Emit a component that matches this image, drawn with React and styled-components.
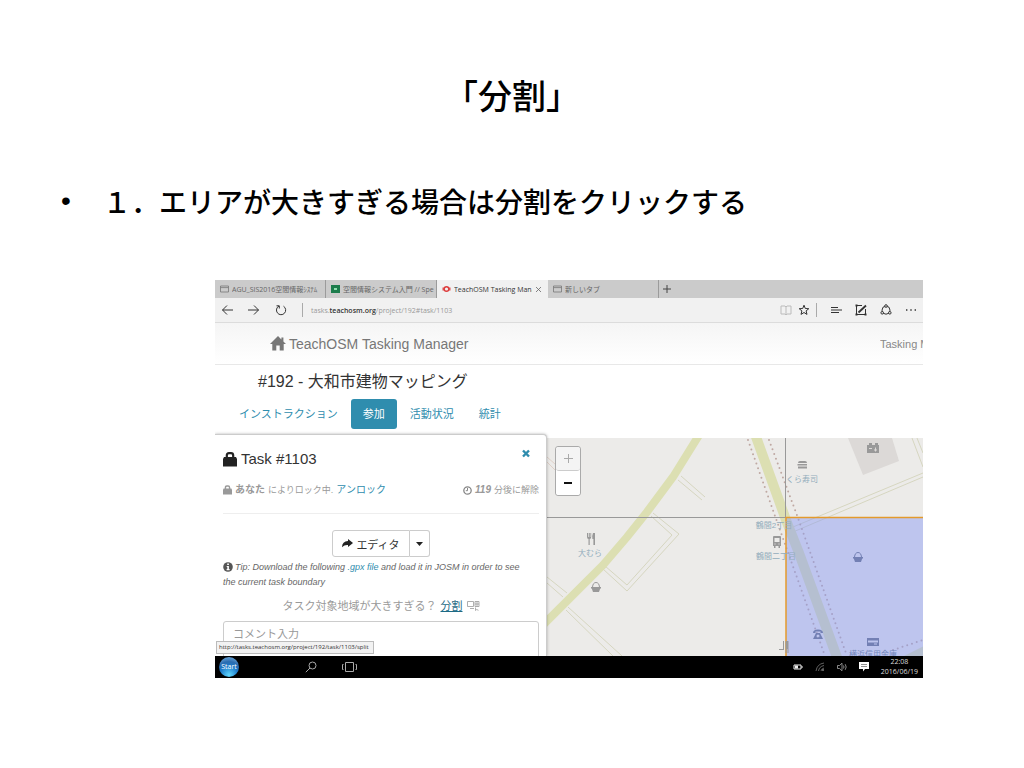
import React from 'react'
import styled, { createGlobalStyle } from 'styled-components'

const GlobalStyle = createGlobalStyle`
    * {
        box-sizing: border-box;
    }

    body {
        margin: 0;
        background: white;
        color: black;
        font-family: "Liberation Sans", "Noto Sans CJK JP", sans-serif;
    }

    button, textarea {
        font-family: inherit;
        margin: 0;
    }

    svg {
        display: block;
        flex: none;
    }
`

const uiFont = '"Open Sans", "Noto Sans CJK JP", sans-serif'

const tabs = [
    { icon: 'page', title: 'AGU_SIS2016空間情報ｼｽﾃﾑ' },
    { icon: 'course', title: '空間情報システム入門 // Spe' },
    { icon: 'osm', title: 'TeachOSM Tasking Manager', active: true },
    { icon: 'page', title: '新しいタブ' }
]

const sections = [
    { label: 'インストラクション' },
    { label: '参加', active: true },
    { label: '活動状況' },
    { label: '統計' }
]

/* slide */

const Slide = styled.main`
    padding: 70px 0 89px;
`

const SlideTitle = styled.h1`
    margin: 0;
    text-align: center;
    font: 500 34px/50px "Noto Sans CJK JP", sans-serif;
`

const BulletList = styled.ul`
    list-style: none;
    margin: 60px 0 58px;
    padding: 0 61px;
`

const BulletItem = styled.li`
    display: flex;
    font: 500 28px/42px "Noto Sans CJK JP", sans-serif;

    &::before {
        content: '•';
        width: 42px;
        font-family: "Liberation Sans", sans-serif;
    }
`

const Browser = styled.section`
    position: relative;
    margin: 0 101px 0 215px;
    overflow: hidden;
    background: white;
`

/* browser chrome */

const TabBar = styled.div`
    display: flex;
    height: 18px;
    background: #cbcbcb;
`

const Tab = styled.button`
    display: flex;
    align-items: center;
    gap: 3px;
    width: 111px;
    padding: 0 ${props => props.$active ? 5 : 1}px 0 5px;
    border: 0;
    border-right: 1px solid ${props => props.$active ? '#f1f1f1' : '#9b9b9b'};
    background: ${props => props.$active ? '#f1f1f1' : 'transparent'};
    color: ${props => props.$active ? '#333' : '#666'};
    font-family: ${uiFont};
    font-size: 7px;
    text-align: left;
`

const TabTitle = styled.span`
    flex: 1;
    overflow: hidden;
    white-space: nowrap;
`

const NewTab = styled.button`
    display: flex;
    align-items: center;
    padding: 0 4px;
    border: 0;
    background: none;
`

const AddressBar = styled.div`
    display: flex;
    align-items: center;
    justify-content: space-between;
    height: 25px;
    padding: 0 6px;
    border-bottom: 1px solid #dcdcdc;
    background: #f1f1f1;
`

const ToolGroup = styled.div`
    display: flex;
    align-items: center;
    gap: ${props => props.$gap || 15}px;
`

const ToolButton = styled.button`
    display: flex;
    padding: 0;
    border: 0;
    background: none;
    color: #333;
`

const Divider = styled.span`
    width: 1px;
    height: 14px;
    background: #aaa;
`

const Address = styled.span`
    color: #999;
    font-family: ${uiFont};
    font-size: 7px;

    b {
        color: #333;
        font-weight: 600;
    }
`

/* tasking manager page */

const Navbar = styled.header`
    display: flex;
    align-items: center;
    justify-content: space-between;
    height: 42px;
    padding-left: 55px;
    border-bottom: 1px solid #e8e8e8;
    background: linear-gradient(#f5f5f5, white);
    color: #777;
`

const Brand = styled.a`
    display: flex;
    align-items: center;
    gap: 3px;
    color: inherit;
    font-size: 14px;
    text-decoration: none;
`

const NavLink = styled.a`
    width: 43px;
    overflow: hidden;
    color: #888;
    font-size: 11px;
    text-decoration: none;
    white-space: nowrap;
`

const ProjectTitle = styled.h2`
    margin: 0;
    padding: 6px 43px;
    color: #333;
    font-size: 16px;
    font-weight: 400;
    line-height: 22px;
`

const Pills = styled.nav`
    display: flex;
    gap: 1px;
    padding: 0 12px 9px;
`

const Pill = styled.a`
    padding: 0 12px;
    border-radius: 3px;
    background: ${props => props.$active ? '#2f8dae' : 'transparent'};
    color: ${props => props.$active ? 'white' : '#2f8dae'};
    font-size: 11px;
    line-height: 30px;
    text-decoration: none;
`

const Workspace = styled.div`
    display: flex;
    height: 218px;
`

const Panel = styled.section`
    position: relative;
    z-index: 1;
    flex: none;
    width: 332px;
    height: 222px;
    margin-top: -4px;
    padding: 14px 7px 0 8px;
    overflow: hidden;
    border-top: 1px solid #ccc;
    border-right: 1px solid #ccc;
    border-radius: 0 4px 0 0;
    background: white;
    box-shadow: 0 0 3px rgba(0, 0, 0, 0.3);
    color: #999;
`

const PanelHeader = styled.div`
    display: flex;
    justify-content: space-between;
    align-items: flex-start;
    padding-right: 9px;
`

const TaskTitle = styled.h3`
    display: flex;
    align-items: center;
    gap: 4px;
    margin: 0;
    color: #333;
    font-size: 15px;
    font-weight: 400;
    line-height: 20px;
`

const CloseButton = styled.button`
    display: flex;
    padding: 0;
    border: 0;
    background: none;
`

const LockRow = styled.div`
    display: flex;
    justify-content: space-between;
    margin-top: 13px;
    padding-bottom: 15px;
    border-bottom: 1px solid #eee;
    font-size: 9px;
    line-height: 16px;

    b {
        font-size: 10px;
    }
`

const LockInfo = styled.span`
    display: flex;
    align-items: center;
    gap: 3px;
`

const Link = styled.a`
    color: ${props => props.$active ? '#1d6a85' : '#2f8dae'};
    font-size: ${props => props.$size || 10}px;
    text-decoration: ${props => props.$active ? 'underline' : 'none'};
`

const ButtonGroup = styled.div`
    display: flex;
    justify-content: center;
    margin-top: 16px;
`

const GroupButton = styled.button`
    display: flex;
    align-items: center;
    gap: 3px;
    height: 27px;
    padding: 0 ${props => props.$caret ? 6 : 9}px;
    border: 1px solid #ccc;
    border-left-width: ${props => props.$caret ? 0 : 1}px;
    border-radius: ${props => props.$caret ? '0 3px 3px 0' : '3px 0 0 3px'};
    background: white;
    color: #333;
    font-size: 11px;
`

const Tip = styled.p`
    margin: 3px 0 0;
    padding-right: 9px;
    color: #666;
    font-size: 9px;
    font-style: italic;
    line-height: 15px;

    svg {
        display: inline-block;
        margin-right: 2px;
        vertical-align: -2px;
    }
`

const SplitRow = styled.div`
    display: flex;
    align-items: center;
    justify-content: center;
    gap: 4px;
    margin-top: 7px;
    font-size: 11px;
    line-height: 18px;
`

const CommentBox = styled.textarea`
    display: block;
    width: 100%;
    height: 60px;
    margin-top: 6px;
    padding: 4px 9px;
    border: 1px solid #ccc;
    border-radius: 3px;
    font-size: 11px;
    line-height: 16px;
    resize: none;

    &::placeholder {
        color: #999;
    }
`

const MapPane = styled.div`
    position: relative;
    flex: 1;
    min-width: 0;
    overflow: hidden;
    background: #ecebe9;
`

const ZoomControl = styled.div`
    position: absolute;
    top: 8px;
    left: 8px;
    border: 1px solid #aaa;
    border-radius: 3px;
    background: white;
`

const ZoomButton = styled.button`
    display: flex;
    align-items: center;
    justify-content: center;
    width: 24px;
    height: 24px;
    padding: 0;
    border: 0;
    border-bottom: ${props => props.disabled ? '1px solid #ccc' : '0'};
    border-radius: 3px;
    background: ${props => props.disabled ? '#f4f4f4' : 'white'};
`

const MapLabel = styled.text`
    fill: ${props => props.$dark ? '#7488bd' : '#93adbc'};
    font-size: 8px;
    text-anchor: middle;
`

const StatusTip = styled.div`
    position: absolute;
    z-index: 2;
    bottom: 24px;
    left: 1px;
    padding: 0 4px 0 2px;
    border: 1px solid #bbb;
    background: #f2f2f2;
    color: #333;
    font-family: ${uiFont};
    font-size: 6px;
    line-height: 11px;
`

const Taskbar = styled.footer`
    display: flex;
    align-items: center;
    justify-content: space-between;
    height: 22px;
    padding: 0 5px 0 4px;
    background: black;
    color: #ddd;
    font-family: ${uiFont};
    font-size: 7px;
`

const StartButton = styled.button`
    width: 20px;
    height: 20px;
    margin-right: 50px;
    padding: 0;
    border: 0;
    border-radius: 50%;
    background: radial-gradient(circle at 50% 90%, #5fd8ff, #1c78c8 45%, #2b6cb0 65%, #8cc4ee);
    color: white;
    font-size: 7px;
    line-height: 20px;
`

const Clock = styled.time`
    line-height: 10px;
    text-align: center;
`

/* icons */

const TabIcon = ({ kind }) => {
    if (kind === 'course') {
        return (
            <svg width="9" height="8" viewBox="0 0 9 8">
                <rect width="9" height="8" fill="#1c7c4c" />
                <rect x="3" y="3" width="3" height="2" fill="#8fe0b0" />
            </svg>
        )
    }
    if (kind === 'osm') {
        return (
            <svg width="9" height="8" viewBox="0 0 9 8" fill="none" stroke="#dd3c3c">
                <circle cx="4.500" cy="4" r="2.300" strokeWidth="1.400" />
                <path d="M1.200 2.500v3M7.800 2.500v3" strokeWidth="1.300" />
            </svg>
        )
    }
    return (
        <svg width="9" height="8" viewBox="0 0 9 8" fill="none" stroke="#777" strokeWidth=".8">
            <path d="M.5 1h8v6h-8zM.5 2.600h8" />
        </svg>
    )
}

const Stroke = ({ w = 12, h = 12, color = '#333', width = 1, children }) => (
    <svg width={w} height={h} viewBox={`0 0 ${w} ${h}`} fill="none" stroke={color} strokeWidth={width}>
        {children}
    </svg>
)

const LockIcon = ({ w, h, color }) => (
    <svg width={w} height={h} viewBox="0 0 14 15">
        <path d="M3.800 7V3.500Q3.800 1.200 6 1.200H8Q10.200 1.200 10.200 3.500V7" fill="none" stroke={color} strokeWidth="2.200" />
        <path d="M1 5h12L14 7v7.500H0V7z" fill={color} />
    </svg>
)

const HomeIcon = () => (
    <svg width="16" height="15" viewBox="0 0 16 15" fill="#777">
        <path d="M8 0 0 8h2.300v6.500h4V9.500h3.400v5h4V8H16l-2.600-2.600V1.500h-2v1.900z" />
    </svg>
)

const Basket = ({ x, y, color }) => (
    <g transform={`translate(${x} ${y})`}>
        <path d="M-3.500 0Q-3-4.500 0-4.500T3.500 0" fill="none" stroke={color} />
        <path d="M-5 0H5V1.500H4.200L3 5h-6l-1.200-3.500H-5z" fill={color} />
    </g>
)

const TaskMap = () => (
    <svg width="100%" height="218" viewBox="0 0 376 218" preserveAspectRatio="xMinYMin slice">
        <path d="M301 0h44l7 23-36 14z" fill="#dcd9d7" />
        <g fill="none" stroke="#d6d6c0">
            <path d="M134 38l24 21M131 42l24 20" />
            <path d="M106 75l26 21-52 57-24-22M104 78l21 19-45 50-22-19" />
            <path d="M0 139l20 16M0 145l16 14M21 169l54 49M19 172l47 46" />
            <path d="M0 19l8 7M0 24l8 8" stroke="#dfd0c8" />
            <path d="M246 89L376 35M246 94L376 39M365 0l11 29M370 0l6 15" />
        </g>
        <g fill="none" stroke="#dcdfb2" strokeWidth="8">
            <path d="M154-6 126 39 100 74 80 99 56 127-4 187" />
            <path d="M208-4 239 82 252 115 291 222" strokeWidth="10" />
            <path d="M354 224 380 211" />
        </g>
        <g fill="none" stroke="#bfa8a2" strokeWidth="2" strokeLinecap="round" strokeDasharray="0 5">
            <path d="M201 2l32 90 45 126M222 2l29 78 49 138M346 212l30-10" />
        </g>
        <path d="M0 79.500H239M238.500 0V79" stroke="#999" fill="none" />
        <rect x="239" y="79" width="160" height="150" fill="#8799f4" fillOpacity=".46" />
        <path d="M239 218V79.500H376" stroke="#e39a2d" strokeWidth="1.500" fill="none" />

        <g fill="#999">
            <path d="M40 95v4q0 2 1.500 2v6h1.200v-6q1.500 0 1.500-2v-4h-.8v4h-.6v-4h-1v4h-.7v-4zM46 95q-1 2-.6 6h1v6H48V95z" />
            <path d="M320 7h2V5h3v2h3V5h3v2h1v8h-12zM322 10h3v1h-3zM328 9.500v2h-1v1h1v1h1v-1h1v-1h-1v-2z" fillRule="evenodd" />
            <path d="M251 25q0-2 2-2h5q2 0 2 2zM250.500 26h9.500v1.500h-9.500zM251 28.500h9v2h-9z" />
            <path d="M226 99q0-1 1-1h6q1 0 1 1v9h-1v2h-1.500v-2h-3v2H227v-2h-1zM227.500 100v4h5v-4zM227.500 105.500h1v1h-1zM231.500 105.500h1v1h-1z" fillRule="evenodd" />
            <path d="M236 203h1v9h-5v-1h4zM238.500 203h3v12h-1v-4h-1v4h-1z" />
        </g>
        <g fill="#7380b4">
            <path d="M266 195q0-3.500 5-3.500t5 3.500h-2.500v-1.500h-5v1.500zM269 195h4l3 6h-10zM271 196.500a1.500 1.500 0 100 3 1.500 1.500 0 000-3" fillRule="evenodd" />
            <path d="M320 200h12v8h-12zM321 202.500v2h10v-2zM327 205.500h3v1h-3z" fillRule="evenodd" />
        </g>
        <Basket x={49} y={149} color="#999" />
        <Basket x={311} y={119} color="#7380b4" />

        <MapLabel x="43" y="118">大むら</MapLabel>
        <MapLabel x="255" y="44">くら寿司</MapLabel>
        <MapLabel x="227" y="90">鶴間2丁目</MapLabel>
        <MapLabel x="229" y="121">鶴間二丁目</MapLabel>
        <MapLabel x="326" y="219" $dark>横浜信用金庫</MapLabel>
    </svg>
)

const BrowserChrome = () => (
    <>
        <TabBar>
            {tabs.map(tab => (
                <Tab key={tab.title} $active={tab.active}>
                    <TabIcon kind={tab.icon} />
                    <TabTitle>{tab.title}</TabTitle>
                    {tab.active && <Stroke w={7} h={7} color="#666" width={0.8}><path d="M1 1l5 5M6 1L1 6" /></Stroke>}
                </Tab>
            ))}
            <NewTab aria-label="New tab">
                <Stroke w={8} h={8} color="#444"><path d="M4 0v8M0 4h8" /></Stroke>
            </NewTab>
        </TabBar>
        <AddressBar>
            <ToolGroup>
                <ToolButton aria-label="Back">
                    <Stroke><path d="M6 1.500L1.500 6 6 10.500M1.500 6H12" /></Stroke>
                </ToolButton>
                <ToolButton aria-label="Forward">
                    <Stroke><path d="M6 1.500L10.500 6 6 10.500M10.500 6H0" /></Stroke>
                </ToolButton>
                <ToolButton aria-label="Refresh">
                    <Stroke><path d="M4 2A4.600 4.600 0 1 0 8.500 2.200M1.500 1.800H4.300V4.500" /></Stroke>
                </ToolButton>
                <ToolGroup $gap={8}>
                    <Divider />
                    <Address>tasks.<b>teachosm.org</b>/project/192#task/1103</Address>
                </ToolGroup>
            </ToolGroup>
            <ToolGroup $gap={13}>
                <ToolGroup $gap={6}>
                    <ToolButton aria-label="Reading view">
                        <Stroke color="#bbb"><path d="M1 2h4l1 1 1-1h4v8H7L6 11 5 10H1zM6 3v8" /></Stroke>
                    </ToolButton>
                    <ToolButton aria-label="Favorites">
                        <Stroke><path d="M6 1.200l1.300 3.300 3.500.2-2.700 2.200.9 3.500L6 8.500l-3 1.900.9-3.500L1.200 4.700l3.500-.2z" /></Stroke>
                    </ToolButton>
                    <Divider />
                </ToolGroup>
                <ToolButton aria-label="Hub">
                    <Stroke><path d="M1 3.500h7M1 6h11M1 8.500h8" /></Stroke>
                </ToolButton>
                <ToolButton aria-label="Web note">
                    <Stroke>
                        <path d="M7 1.500H1.500v9h9V5" />
                        <path d="M3.500 8.500L11 1.500" strokeWidth="1.800" />
                        <path d="M.5 1.500h2M.5 10.500h2M9.500 10.500h2" strokeWidth="2" />
                    </Stroke>
                </ToolButton>
                <ToolButton aria-label="Share">
                    <Stroke>
                        <circle cx="6" cy="6.200" r="4" />
                        <g fill="#f1f1f1"><circle cx="6" cy="2" r="1.300" /><circle cx="2.200" cy="8.800" r="1.300" /><circle cx="9.800" cy="8.800" r="1.300" /></g>
                    </Stroke>
                </ToolButton>
                <ToolButton aria-label="More">
                    <Stroke><path d="M1 6h1.400M5.300 6h1.400M9.600 6H11" strokeWidth="1.400" /></Stroke>
                </ToolButton>
            </ToolGroup>
        </AddressBar>
    </>
)

const TaskPanel = () => (
    <Panel>
        <PanelHeader>
            <TaskTitle><LockIcon w={14} h={15} color="#222" />Task #1103</TaskTitle>
            <CloseButton aria-label="Close">
                <Stroke w={8} h={9} color="#2f8dae" width={2.4}><path d="M1 1.500l6 6M7 1.500l-6 6" /></Stroke>
            </CloseButton>
        </PanelHeader>
        <LockRow>
            <LockInfo>
                <LockIcon w={9} h={10} color="#999" />
                <b>あなた</b>
                <span>によりロック中.</span>
                <Link href="#unlock">アンロック</Link>
            </LockInfo>
            <LockInfo>
                <Stroke w={9} h={9} color="#888" width={1.3}><circle cx="4.500" cy="4.500" r="3.700" /><path d="M4.500 2v2.700H2.800" strokeWidth="1" /></Stroke>
                <b><i>119</i></b>
                <span>分後に解除</span>
            </LockInfo>
        </LockRow>
        <ButtonGroup>
            <GroupButton>
                <svg width="11" height="9" viewBox="0 0 11 9" fill="#222">
                    <path d="M6 0L11 4 6 8V6Q2.500 5.600 0 8.200.2 2.200 6 2z" />
                </svg>
                エディタ
            </GroupButton>
            <GroupButton $caret aria-label="More editors">
                <svg width="7" height="4" viewBox="0 0 7 4" fill="#222"><path d="M0 0h7L3.500 4z" /></svg>
            </GroupButton>
        </ButtonGroup>
        <Tip>
            <svg width="10" height="10" viewBox="0 0 10 10">
                <circle cx="5" cy="5" r="4.800" fill="#555" />
                <path d="M4.200 1.600h1.700v1.500H4.200zM3.700 4h2.200v3h.7v1.200H3.600V7h.7V5.100h-.6z" fill="white" />
            </svg>
            Tip: Download the following <Link href="#gpx" $size={9}>.gpx file</Link> and load it in JOSM in order to see the current task boundary
        </Tip>
        <SplitRow>
            <span>タスク対象地域が大きすぎる？</span>
            <Link href="#split" $active $size={11}>分割</Link>
            <Stroke w={13} h={10} color="#999" width={0.8}>
                <path d="M.5.500h6v5h-6zM8 .5h4v5H8zM8 3h4M10 .5v5M3 7.500h4M8.500 6.500v3l1.200-1 1.800.8" />
            </Stroke>
        </SplitRow>
        <CommentBox aria-label="コメント入力" placeholder="コメント入力" />
    </Panel>
)

const App = () => {
    return (
        <>
            <GlobalStyle />
            <Slide lang="ja">
                <SlideTitle>「分割」</SlideTitle>
                <BulletList>
                    <BulletItem>１．エリアが大きすぎる場合は分割をクリックする</BulletItem>
                </BulletList>
                <Browser>
                    <BrowserChrome />
                    <Navbar>
                        <Brand href="#home"><HomeIcon />TeachOSM Tasking Manager</Brand>
                        <NavLink href="#about">Tasking Manager</NavLink>
                    </Navbar>
                    <ProjectTitle>#192 - 大和市建物マッピング</ProjectTitle>
                    <Pills>
                        {sections.map(item => (
                            <Pill key={item.label} href={`#${item.label}`} $active={item.active}>{item.label}</Pill>
                        ))}
                    </Pills>
                    <Workspace>
                        <TaskPanel />
                        <MapPane>
                            <TaskMap />
                            <ZoomControl>
                                <ZoomButton disabled aria-label="Zoom in">
                                    <Stroke w={9} h={9} color="#aaa"><path d="M4.500 0v9M0 4.500h9" /></Stroke>
                                </ZoomButton>
                                <ZoomButton aria-label="Zoom out">
                                    <Stroke w={8} h={2} color="#111" width={2}><path d="M0 1h8" /></Stroke>
                                </ZoomButton>
                            </ZoomControl>
                        </MapPane>
                    </Workspace>
                    <StatusTip>http://tasks.teachosm.org/project/192/task/1103/split</StatusTip>
                    <Taskbar>
                        <ToolGroup $gap={16}>
                            <StartButton>Start</StartButton>
                            <Stroke w={12} h={12} color="#aaa"><circle cx="7.500" cy="4.500" r="3.500" /><path d="M5 7L.8 11.200" /></Stroke>
                            <Stroke w={32} h={12} color="#aaa"><path d="M12.500 1.500h8v9h-8zM10.500 3.500h-1v5h1M22.500 3.500h1v5h-1" /></Stroke>
                        </ToolGroup>
                        <ToolGroup $gap={12}>
                            <Stroke w={10} h={10} color="#eee"><path d="M1 3h7v4H1zM9 4v2" /><path d="M2 5h3" strokeWidth="3" /></Stroke>
                            <Stroke w={10} h={10} color="#777" width={0.8}><path d="M1 9Q2 2 9 1M3.500 9Q4 4.500 9 3.500M6 9Q6 7 9 6M7 7l2 2M9 7L7 9" /></Stroke>
                            <Stroke w={10} h={10} color="#aaa" width={0.8}><path d="M.5 3.500h2L5 1.200v7.600L2.500 6.500h-2zM6.500 3.500q1 1.500 0 3M8.200 2.200q2 2.800 0 5.600" /></Stroke>
                            <svg width="10" height="10" viewBox="0 0 10 10">
                                <path d="M0 0h10v7H6L4 9.500V7H0z" fill="white" />
                                <path d="M2 2.500h6M2 4.500h6" stroke="#777" strokeWidth=".8" />
                            </svg>
                            <Clock><div>22:08</div><div>2016/06/19</div></Clock>
                        </ToolGroup>
                    </Taskbar>
                </Browser>
            </Slide>
        </>
    )
}

export default App
